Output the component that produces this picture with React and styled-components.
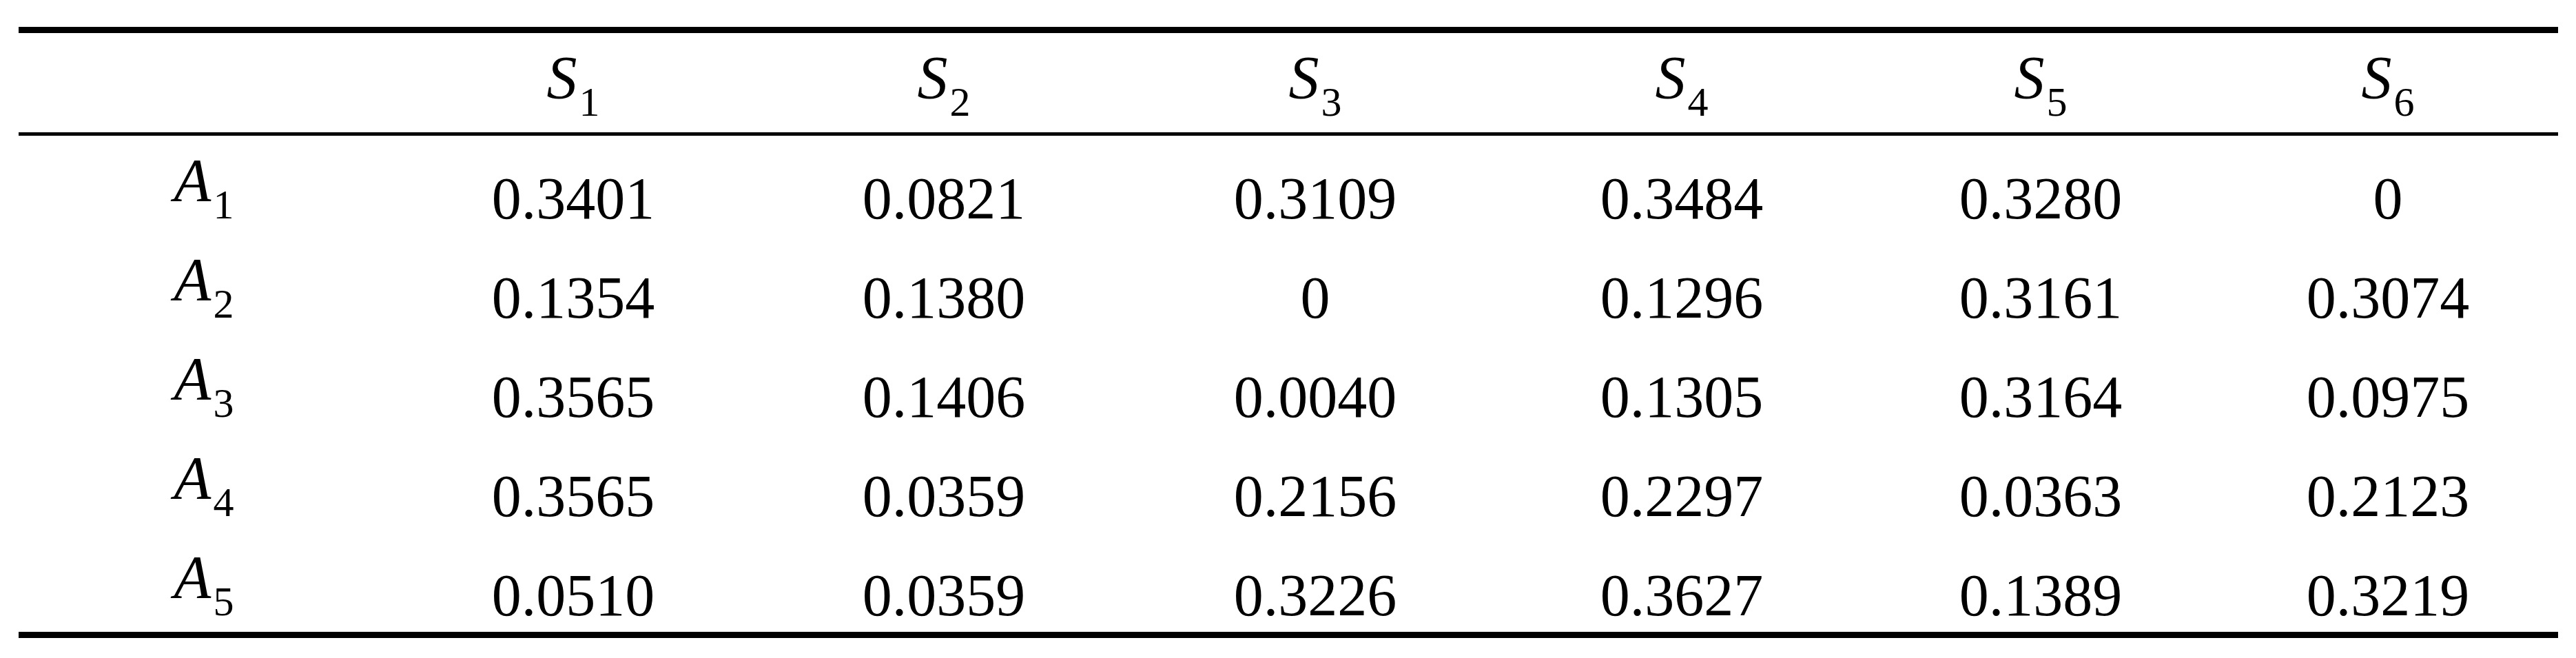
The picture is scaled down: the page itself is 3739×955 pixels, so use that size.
import styled, { createGlobalStyle } from "styled-components";

const GlobalStyle = createGlobalStyle`
  html, body {
    margin: 0;
    padding: 0;
    background: #ffffff;
  }
  body {
    font-family: "Liberation Serif", "Times New Roman", serif;
    color: #000000;
  }
`;

const Page = styled.div`
  padding: 39px 26px 0 27px;
`;

const Table = styled.table`
  width: 3686px;
  table-layout: fixed;
  border-collapse: separate;
  border-spacing: 0;
  font-size: 86px;
`;

const Col = styled.col`
  width: ${({ $w }) => $w}px;
`;

const Cell = styled.td`
  height: 144px;
  box-sizing: content-box;
  padding: 0;
  text-align: center;
  vertical-align: top;
  white-space: nowrap;
  font-weight: normal;
  border-top: ${({ $top }) => ($top ? `${$top}px solid #000` : "none")};
  border-bottom: ${({ $bottom }) => ($bottom ? `${$bottom}px solid #000` : "none")};
`;

/* keeps the digits' baseline 120px under the row's top */
const Line = styled.div`
  height: 144px;
  padding-top: 38px;
  box-sizing: border-box;
  line-height: 106px;
`;

const Var = styled.span`
  font-style: italic;
  font-size: 88px;
  line-height: 0;
  vertical-align: 26px;
`;

const Sub = styled.span`
  font-size: 60px;
  line-height: 0;
  margin-left: 3px;
`;

const widths = [538, 534, 542, 536, 528, 514, 494];

const rows = [
  ["0.3401", "0.0821", "0.3109", "0.3484", "0.3280", "0"],
  ["0.1354", "0.1380", "0", "0.1296", "0.3161", "0.3074"],
  ["0.3565", "0.1406", "0.0040", "0.1305", "0.3164", "0.0975"],
  ["0.3565", "0.0359", "0.2156", "0.2297", "0.0363", "0.2123"],
  ["0.0510", "0.0359", "0.3226", "0.3627", "0.1389", "0.3219"],
];

function Symbol({ letter, index }) {
  return (
    <>
      <Var>{letter}</Var>
      <Sub>{index}</Sub>
    </>
  );
}

export default function App() {
  return (
    <Page>
      <GlobalStyle />
      <Table>
        <colgroup>
          {widths.map((w, i) => (
            <Col key={i} $w={w} />
          ))}
        </colgroup>
        <thead>
          <tr>
            <Cell as="th" $top={9} $bottom={5} />
            {[1, 2, 3, 4, 5, 6].map((n) => (
              <Cell as="th" key={n} $top={9} $bottom={5}>
                <Line>
                  <Symbol letter="S" index={n} />
                </Line>
              </Cell>
            ))}
          </tr>
        </thead>
        <tbody>
          {rows.map((row, r) => {
            const last = r === rows.length - 1;
            return (
              <tr key={r}>
                <Cell $bottom={last ? 9 : 0}>
                  <Line>
                    <Symbol letter="A" index={r + 1} />
                  </Line>
                </Cell>
                {row.map((v, c) => (
                  <Cell key={c} $bottom={last ? 9 : 0}>
                    <Line>{v}</Line>
                  </Cell>
                ))}
              </tr>
            );
          })}
        </tbody>
      </Table>
    </Page>
  );
}
